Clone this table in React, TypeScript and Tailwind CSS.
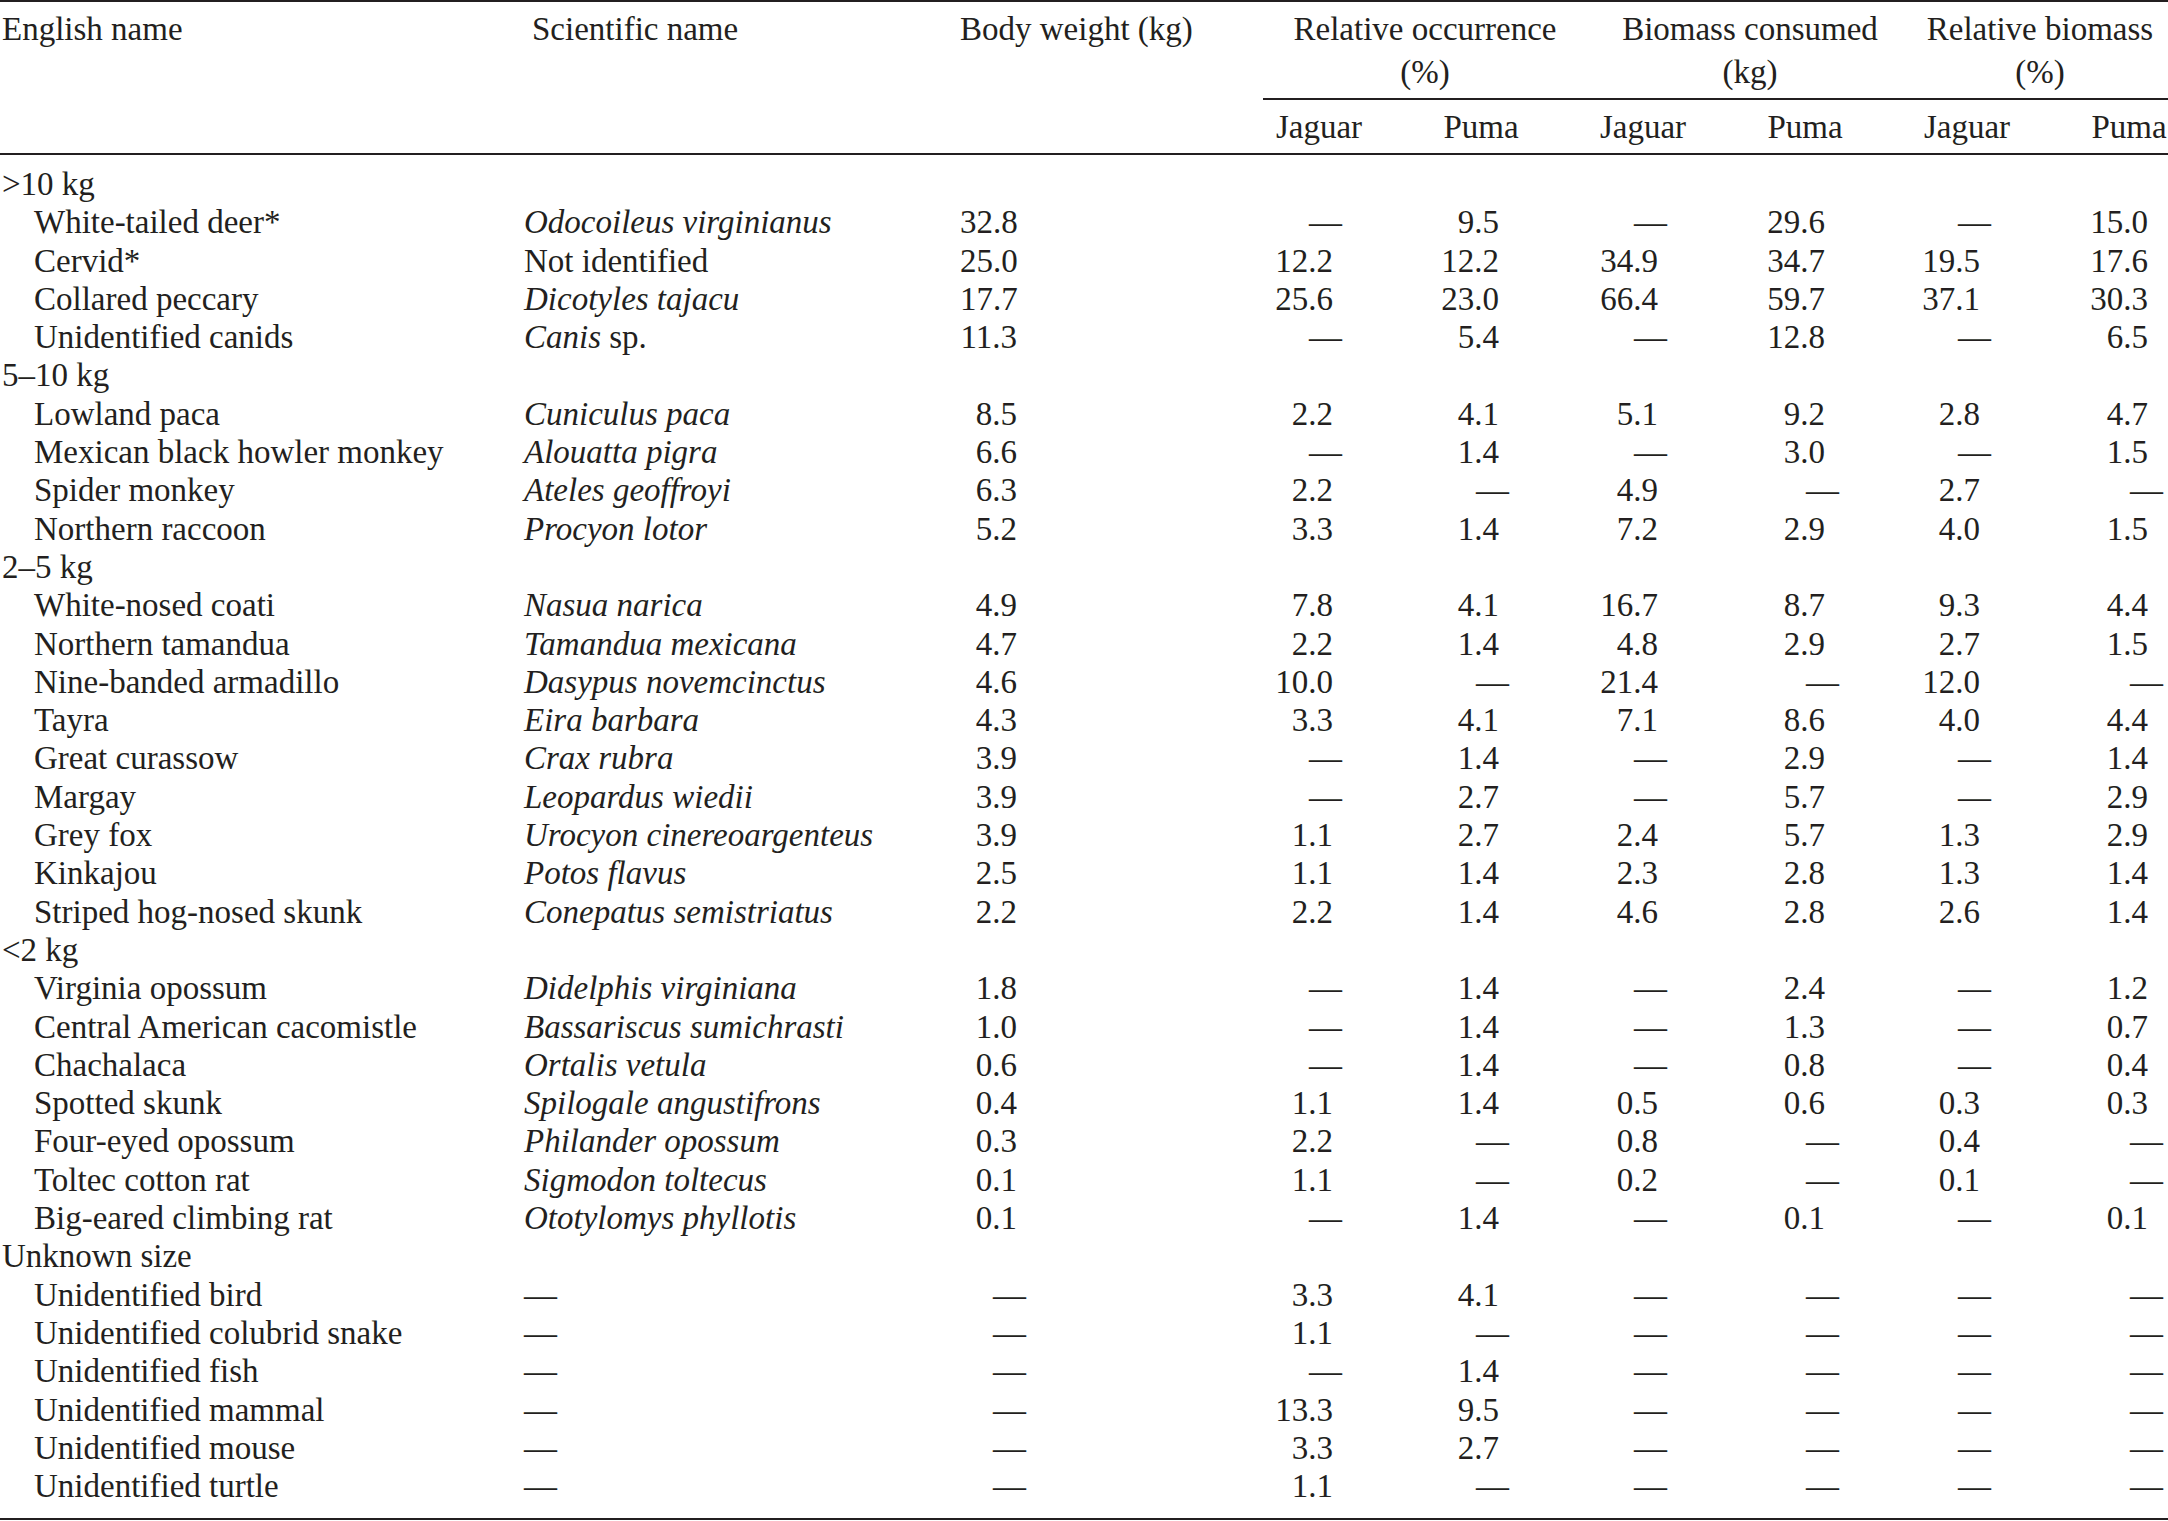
import React from "react";

type Row =
  | { kind: "group"; label: string }
  | { kind: "item"; name: string; sci: React.ReactNode; values: string[] };

const D = "—";

const rows: Row[] = [
  { kind: "group", label: ">10 kg" },
  { kind: "item", name: "White-tailed deer*", sci: <i>Odocoileus virginianus</i>, values: ["32.8", D, "9.5", D, "29.6", D, "15.0"] },
  { kind: "item", name: "Cervid*", sci: "Not identified", values: ["25.0", "12.2", "12.2", "34.9", "34.7", "19.5", "17.6"] },
  { kind: "item", name: "Collared peccary", sci: <i>Dicotyles tajacu</i>, values: ["17.7", "25.6", "23.0", "66.4", "59.7", "37.1", "30.3"] },
  { kind: "item", name: "Unidentified canids", sci: <><i>Canis</i> sp.</>, values: ["11.3", D, "5.4", D, "12.8", D, "6.5"] },
  { kind: "group", label: "5–10 kg" },
  { kind: "item", name: "Lowland paca", sci: <i>Cuniculus paca</i>, values: ["8.5", "2.2", "4.1", "5.1", "9.2", "2.8", "4.7"] },
  { kind: "item", name: "Mexican black howler monkey", sci: <i>Alouatta pigra</i>, values: ["6.6", D, "1.4", D, "3.0", D, "1.5"] },
  { kind: "item", name: "Spider monkey", sci: <i>Ateles geoffroyi</i>, values: ["6.3", "2.2", D, "4.9", D, "2.7", D] },
  { kind: "item", name: "Northern raccoon", sci: <i>Procyon lotor</i>, values: ["5.2", "3.3", "1.4", "7.2", "2.9", "4.0", "1.5"] },
  { kind: "group", label: "2–5 kg" },
  { kind: "item", name: "White-nosed coati", sci: <i>Nasua narica</i>, values: ["4.9", "7.8", "4.1", "16.7", "8.7", "9.3", "4.4"] },
  { kind: "item", name: "Northern tamandua", sci: <i>Tamandua mexicana</i>, values: ["4.7", "2.2", "1.4", "4.8", "2.9", "2.7", "1.5"] },
  { kind: "item", name: "Nine-banded armadillo", sci: <i>Dasypus novemcinctus</i>, values: ["4.6", "10.0", D, "21.4", D, "12.0", D] },
  { kind: "item", name: "Tayra", sci: <i>Eira barbara</i>, values: ["4.3", "3.3", "4.1", "7.1", "8.6", "4.0", "4.4"] },
  { kind: "item", name: "Great curassow", sci: <i>Crax rubra</i>, values: ["3.9", D, "1.4", D, "2.9", D, "1.4"] },
  { kind: "item", name: "Margay", sci: <i>Leopardus wiedii</i>, values: ["3.9", D, "2.7", D, "5.7", D, "2.9"] },
  { kind: "item", name: "Grey fox", sci: <i>Urocyon cinereoargenteus</i>, values: ["3.9", "1.1", "2.7", "2.4", "5.7", "1.3", "2.9"] },
  { kind: "item", name: "Kinkajou", sci: <i>Potos flavus</i>, values: ["2.5", "1.1", "1.4", "2.3", "2.8", "1.3", "1.4"] },
  { kind: "item", name: "Striped hog-nosed skunk", sci: <i>Conepatus semistriatus</i>, values: ["2.2", "2.2", "1.4", "4.6", "2.8", "2.6", "1.4"] },
  { kind: "group", label: "<2 kg" },
  { kind: "item", name: "Virginia opossum", sci: <i>Didelphis virginiana</i>, values: ["1.8", D, "1.4", D, "2.4", D, "1.2"] },
  { kind: "item", name: "Central American cacomistle", sci: <i>Bassariscus sumichrasti</i>, values: ["1.0", D, "1.4", D, "1.3", D, "0.7"] },
  { kind: "item", name: "Chachalaca", sci: <i>Ortalis vetula</i>, values: ["0.6", D, "1.4", D, "0.8", D, "0.4"] },
  { kind: "item", name: "Spotted skunk", sci: <i>Spilogale angustifrons</i>, values: ["0.4", "1.1", "1.4", "0.5", "0.6", "0.3", "0.3"] },
  { kind: "item", name: "Four-eyed opossum", sci: <i>Philander opossum</i>, values: ["0.3", "2.2", D, "0.8", D, "0.4", D] },
  { kind: "item", name: "Toltec cotton rat", sci: <i>Sigmodon toltecus</i>, values: ["0.1", "1.1", D, "0.2", D, "0.1", D] },
  { kind: "item", name: "Big-eared climbing rat", sci: <i>Ototylomys phyllotis</i>, values: ["0.1", D, "1.4", D, "0.1", D, "0.1"] },
  { kind: "group", label: "Unknown size" },
  { kind: "item", name: "Unidentified bird", sci: D, values: [D, "3.3", "4.1", D, D, D, D] },
  { kind: "item", name: "Unidentified colubrid snake", sci: D, values: [D, "1.1", D, D, D, D, D] },
  { kind: "item", name: "Unidentified fish", sci: D, values: [D, D, "1.4", D, D, D, D] },
  { kind: "item", name: "Unidentified mammal", sci: D, values: [D, "13.3", "9.5", D, D, D, D] },
  { kind: "item", name: "Unidentified mouse", sci: D, values: [D, "3.3", "2.7", D, D, D, D] },
  { kind: "item", name: "Unidentified turtle", sci: D, values: [D, "1.1", D, D, D, D, D] },
];

// numeric columns: body weight + jaguar/puma pairs
const cols = [
  { w: "w-[278px]", num: "pr-[221px]", dash: "pr-[212px]" },
  { w: "w-[162px]", num: "pr-[67px]", dash: "pr-[58px]" },
  { w: "w-[162px]", num: "pr-[63px]", dash: "pr-[53px]" },
  { w: "w-[162px]", num: "pr-[66px]", dash: "pr-[57px]" },
  { w: "w-[162px]", num: "pr-[61px]", dash: "pr-[47px]" },
  { w: "w-[162px]", num: "pr-[68px]", dash: "pr-[57px]" },
  { w: "w-[162px]", num: "pr-[62px]", dash: "pr-[47px]" },
];

const groups = [
  { title: "Relative occurrence", unit: "(%)", pad: "pl-[50px]" },
  { title: "Biomass consumed", unit: "(kg)", pad: "pl-[52px]" },
  { title: "Relative biomass", unit: "(%)", pad: "pr-[16px]" },
];

const rule = "h-[2px] w-full bg-[#231f20]";

export default function App() {
  return (
    <div className="w-full min-h-screen overflow-hidden bg-white">
      <div className="w-[2210px] font-['Liberation_Serif',serif] text-[33px] text-[#231f20]">
        <div className={rule} />

        {/* Header */}
        <div className="flex pt-[7px] pb-[7px] leading-[40px]">
          <div className="w-[524px] pl-[2px]">English name</div>
          <div className="w-[436px] pl-[8px]">Scientific name</div>
          <div className="w-[278px]">Body weight (kg)</div>
          <div className="flex flex-col">
            <div className="flex">
              {groups.map((g) => (
                <div key={g.title} className={`w-[324px] text-center ${g.pad}`}>
                  <div>{g.title}</div>
                  <div className="mt-[3px]">{g.unit}</div>
                </div>
              ))}
            </div>
            <div className="mt-[6px] ml-[25px] h-[2px] bg-[#231f20]" />
            <div className="mt-[8px] flex leading-[38px]">
              {["Jaguar", "Puma", "Jaguar", "Puma", "Jaguar", "Puma"].map((s, i) => (
                <div key={i} className="w-[162px] text-center">
                  {s}
                </div>
              ))}
            </div>
          </div>
        </div>

        <div className={rule} />

        {/* Body */}
        <div className="pt-[10px] pb-[13px] leading-[38.3px]">
          {rows.map((r, i) =>
            r.kind === "group" ? (
              <div key={i} className="pl-[2px] whitespace-nowrap">
                {r.label}
              </div>
            ) : (
              <div key={i} className="flex whitespace-nowrap">
                <div className="w-[524px] pl-[34px]">{r.name}</div>
                <div className="w-[436px]">{r.sci}</div>
                {r.values.map((v, j) => (
                  <div key={j} className={`${cols[j].w} text-right ${v === D ? cols[j].dash : cols[j].num}`}>
                    {v}
                  </div>
                ))}
              </div>
            )
          )}
        </div>

        <div className={rule} />
      </div>
    </div>
  );
}
